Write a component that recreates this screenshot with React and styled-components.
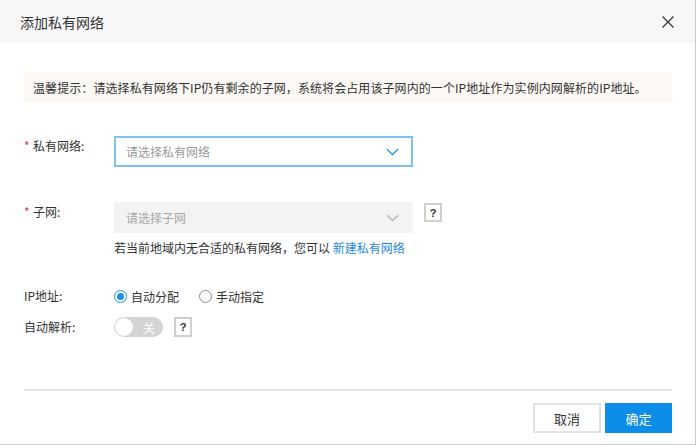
import React, { useState } from "react";
import styled, { createGlobalStyle } from "styled-components";

const GlobalStyle = createGlobalStyle`
  html, body {
    margin: 0;
    padding: 0;
    background: #ffffff;
  }
  body {
    font-family: "Noto Sans CJK SC", "Noto Sans", "Liberation Sans", sans-serif;
    color: #333333;
  }
`;

const Modal = styled.div`
  box-sizing: border-box;
  width: 696px;
  height: 445px;
  border-right: 1px solid #c9c9c9;
  border-bottom: 1px solid #c9c9c9;
  background: #ffffff;
  display: flex;
  flex-direction: column;
`;

const Header = styled.div`
  height: 43px;
  background: #f7f7f7;
  display: flex;
  align-items: center;
  justify-content: space-between;
  padding: 0 21px 0 20px;
`;

const Title = styled.h2`
  margin: 0;
  font-size: 14px;
  font-weight: 400;
  color: #333333;
  line-height: 20px;
`;

const CloseButton = styled.button`
  border: 0;
  background: transparent;
  padding: 0;
  width: 12px;
  height: 12px;
  display: flex;
  cursor: pointer;
`;

const Body = styled.div`
  flex: 1;
  padding: 29px 23px 0 24px;
  display: flex;
  flex-direction: column;
`;

const Tip = styled.div`
  height: 30px;
  background: #fcf8f3;
  display: flex;
  align-items: center;
  padding-left: 9px;
  font-size: 12px;
  letter-spacing: 0.08px;
  color: #333333;
  white-space: nowrap;
`;

const Form = styled.div`
  display: flex;
  flex-direction: column;
  padding-top: 34px;
`;

const Row = styled.div`
  display: flex;
  align-items: ${(p) => (p.$center ? "center" : "flex-start")};
  margin-top: ${(p) => p.$gap || 0}px;
`;

const Label = styled.div`
  width: 90px;
  flex: none;
  font-size: 12px;
  line-height: 20px;
  color: #333333;
`;

const Star = styled.span`
  color: #e4393c;
  display: inline-block;
  width: 9px;
  font-size: 12px;
`;

const Field = styled.div`
  display: flex;
  flex-direction: column;
`;

const FieldLine = styled.div`
  display: flex;
  align-items: flex-start;
  gap: 11px;
`;

const Select = styled.div`
  box-sizing: border-box;
  width: 299px;
  height: 31px;
  display: flex;
  align-items: center;
  justify-content: space-between;
  padding: 0 12px 0 10px;
  font-size: 12px;
  color: ${(p) => (p.$disabled ? "#a8a8a8" : "#999999")};
  background: ${(p) => (p.$disabled ? "#f3f3f3" : "#ffffff")};
  border: 2px solid ${(p) => (p.$disabled ? "#f3f3f3" : "#7cc3f3")};
  cursor: ${(p) => (p.$disabled ? "not-allowed" : "pointer")};
`;

const HelpBox = styled.span`
  box-sizing: border-box;
  width: 18px;
  height: ${(p) => p.$h || 19}px;
  margin-top: ${(p) => p.$offset || 0}px;
  border: 2px solid #cfcfcf;
  background: #ffffff;
  display: inline-flex;
  align-items: center;
  justify-content: center;
  font-size: 11px;
  font-weight: 700;
  color: #333333;
  font-family: "Liberation Sans", "DejaVu Sans", sans-serif;
`;

const Hint = styled.div`
  margin-top: 6px;
  font-size: 12px;
  line-height: 18px;
  color: #333333;
`;

const Link = styled.a`
  color: #1f8ae5;
  text-decoration: none;
  cursor: pointer;
`;

const RadioGroup = styled.div`
  display: flex;
  align-items: center;
  gap: 20px;
  height: 20px;
`;

const RadioItem = styled.label`
  display: flex;
  align-items: center;
  gap: 4px;
  font-size: 12px;
  color: #333333;
  cursor: pointer;
`;

const RadioDot = styled.span`
  box-sizing: border-box;
  width: 13px;
  height: 13px;
  border-radius: 50%;
  border: 1px solid ${(p) => (p.$checked ? "#1890f0" : "#8c8c8c")};
  display: flex;
  align-items: center;
  justify-content: center;
  background: #ffffff;
  &::after {
    content: "";
    width: 7px;
    height: 7px;
    border-radius: 50%;
    background: ${(p) => (p.$checked ? "#1890f0" : "transparent")};
  }
`;

const SwitchLine = styled.div`
  display: flex;
  align-items: center;
  gap: 11px;
`;

const Switch = styled.button`
  box-sizing: border-box;
  width: 49px;
  height: 20px;
  border-radius: 10px;
  border: 0;
  padding: 0 1px;
  background: ${(p) => (p.$on ? "#1890f0" : "#d4d4d4")};
  display: flex;
  align-items: center;
  flex-direction: ${(p) => (p.$on ? "row-reverse" : "row")};
  cursor: pointer;
  font-family: inherit;
`;

const Knob = styled.span`
  width: 18px;
  height: 18px;
  border-radius: 50%;
  background: #ffffff;
  flex: none;
`;

const SwitchText = styled.span`
  flex: 1;
  text-align: center;
  font-size: 12px;
  color: #ffffff;
  padding-left: 3px;
`;

const Footer = styled.div`
  margin-top: auto;
  border-top: 2px solid #e6e6e6;
  padding: 12px 0 11px;
  display: flex;
  justify-content: flex-end;
  gap: 4px;
`;

const Button = styled.button`
  box-sizing: border-box;
  width: ${(p) => (p.$primary ? 67 : 68)}px;
  height: 30px;
  font-family: inherit;
  font-size: 13px;
  cursor: pointer;
  color: ${(p) => (p.$primary ? "#ffffff" : "#333333")};
  background: ${(p) => (p.$primary ? "#0b8de8" : "#ffffff")};
  border: 2px solid ${(p) => (p.$primary ? "#0b8de8" : "#e3e3e3")};
`;

const Chevron = ({ color }) => (
  <svg width="13" height="8" viewBox="0 0 13 8" fill="none">
    <path d="M1 1.2L6.5 6.5L12 1.2" stroke={color} strokeWidth="1.3" />
  </svg>
);

export default function App() {
  const [mode, setMode] = useState("auto");
  const [dns, setDns] = useState(false);

  return (
    <>
      <GlobalStyle />
      <Modal>
        <Header>
          <Title>添加私有网络</Title>
          <CloseButton aria-label="关闭">
            <svg width="12" height="12" viewBox="0 0 12 12">
              <path d="M0.5 0.5L11.5 11.5M11.5 0.5L0.5 11.5" stroke="#333" strokeWidth="1.2" />
            </svg>
          </CloseButton>
        </Header>
        <Body>
          <Tip>
            温馨提示：请选择私有网络下IP仍有剩余的子网，系统将会占用该子网内的一个IP地址作为实例内网解析的IP地址。
          </Tip>
          <Form>
            <Row>
              <Label>
                <Star>*</Star>私有网络:
              </Label>
              <Select>
                <span>请选择私有网络</span>
                <Chevron color="#1b97ee" />
              </Select>
            </Row>
            <Row $gap={35}>
              <Label>
                <Star>*</Star>子网:
              </Label>
              <Field>
                <FieldLine>
                  <Select $disabled>
                    <span>请选择子网</span>
                    <Chevron color="#b5b5b5" />
                  </Select>
                  <HelpBox $offset={1}>?</HelpBox>
                </FieldLine>
                <Hint>
                  若当前地域内无合适的私有网络，您可以 <Link>新建私有网络</Link>
                </Hint>
              </Field>
            </Row>
            <Row $gap={29} $center>
              <Label>IP地址:</Label>
              <RadioGroup>
                <RadioItem onClick={() => setMode("auto")}>
                  <RadioDot $checked={mode === "auto"} />
                  自动分配
                </RadioItem>
                <RadioItem onClick={() => setMode("manual")}>
                  <RadioDot $checked={mode === "manual"} />
                  手动指定
                </RadioItem>
              </RadioGroup>
            </Row>
            <Row $gap={11} $center>
              <Label>自动解析:</Label>
              <SwitchLine>
                <Switch $on={dns} onClick={() => setDns(!dns)}>
                  <Knob />
                  <SwitchText>{dns ? "开" : "关"}</SwitchText>
                </Switch>
                <HelpBox $h={20}>?</HelpBox>
              </SwitchLine>
            </Row>
          </Form>
          <Footer>
            <Button>取消</Button>
            <Button $primary>确定</Button>
          </Footer>
        </Body>
      </Modal>
    </>
  );
}
